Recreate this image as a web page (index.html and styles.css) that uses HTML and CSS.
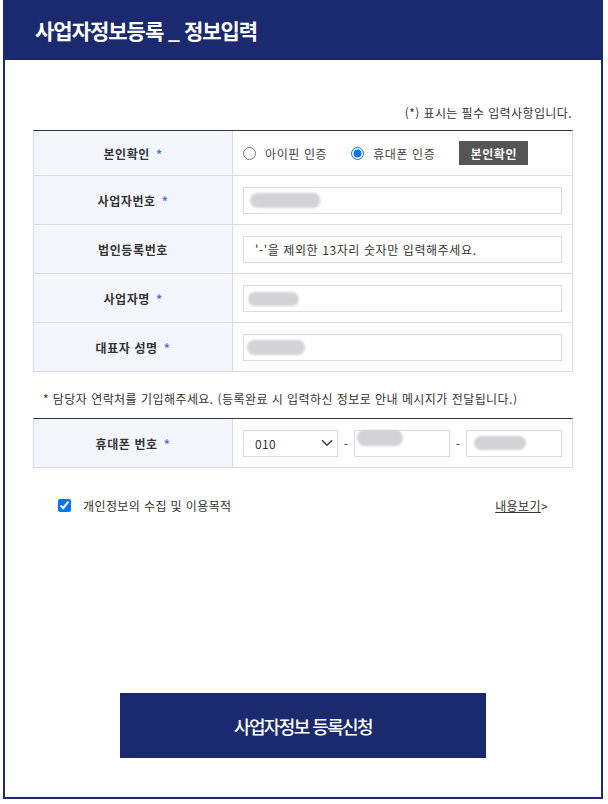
FILE: index.html
```html
<!DOCTYPE html>
<html lang="ko">
<head>
<meta charset="utf-8">
<title>사업자정보등록</title>
<link rel="stylesheet" href="styles.css">
</head>
<body>
<div class="page">
  <header class="top">
    <h1 class="title">사업자정보등록 _ 정보입력</h1>
  </header>
  <main class="content">
    <p class="req-note">(*) 표시는 필수 입력사항입니다.</p>

    <div class="form">
      <div class="row row-first">
        <div class="label">본인확인 <span class="star">*</span></div>
        <div class="cell">
          <label class="radio-item"><input type="radio" name="auth" class="radio"><span>아이핀 인증</span></label>
          <label class="radio-item radio-item-2"><input type="radio" name="auth" class="radio" checked><span>휴대폰 인증</span></label>
          <button class="btn-auth" type="button">본인확인</button>
        </div>
      </div>
      <div class="row">
        <div class="label">사업자번호 <span class="star">*</span></div>
        <div class="cell">
          <div class="field"><span class="blob blob-biz"></span></div>
        </div>
      </div>
      <div class="row">
        <div class="label">법인등록번호</div>
        <div class="cell">
          <div class="field field-text">'-'을 제외한 13자리 숫자만 입력해주세요.</div>
        </div>
      </div>
      <div class="row">
        <div class="label">사업자명 <span class="star">*</span></div>
        <div class="cell">
          <div class="field"><span class="blob blob-name"></span></div>
        </div>
      </div>
      <div class="row">
        <div class="label">대표자 성명 <span class="star">*</span></div>
        <div class="cell">
          <div class="field"><span class="blob blob-ceo"></span></div>
        </div>
      </div>
    </div>

    <p class="contact-note">* 담당자 연락처를 기입해주세요. (등록완료 시 입력하신 정보로 안내 메시지가 전달됩니다.)</p>

    <div class="form phone-form">
      <div class="row">
        <div class="label">휴대폰 번호 <span class="star">*</span></div>
        <div class="cell phone-cell">
          <div class="select">
            <span>010</span>
            <svg class="chev" width="12" height="8" viewBox="0 0 12 8"><path d="M1 1.2 L6 6.2 L11 1.2" fill="none" stroke="#444" stroke-width="1.6"/></svg>
          </div>
          <span class="dash">-</span>
          <div class="field phone-field"><span class="blob blob-ph1"></span></div>
          <span class="dash">-</span>
          <div class="field phone-field"><span class="blob blob-ph2"></span></div>
        </div>
      </div>
    </div>

    <div class="agree">
      <label class="agree-check"><input type="checkbox" class="checkbox" checked><span>개인정보의 수집 및 이용목적</span></label>
      <a class="more" href="#"><span class="more-u">내용보기</span>&gt;</a>
    </div>

    <div class="submit-wrap">
      <button class="submit" type="button">사업자정보 등록신청</button>
    </div>
  </main>
</div>
</body>
</html>
```

FILE: styles.css
```css
* { box-sizing: border-box; }

html, body {
  margin: 0;
  padding: 0;
  background: #fff;
}

body {
  font-family: "Noto Sans CJK KR", "Noto Sans", sans-serif;
  font-size: 12px;
  letter-spacing: 0.4px;
  color: #333;
}

.page {
  width: 600px;
  margin-left: 3px;
}

.top {
  height: 60px;
  background: #1b2a6e;
}

.title {
  margin: 0;
  padding-left: 32px;
  line-height: 60px;
  font-size: 21px;
  font-weight: 700;
  letter-spacing: -1px;
  color: #fff;
}

.content {
  border: 2px solid #1b2a6e;
  border-top: none;
  padding: 44px 28px 39px;
}

.req-note {
  margin: 0;
  line-height: 18px;
  text-align: right;
  color: #333;
  padding-right: 1px;
}

.form {
  margin-top: 8px;
  border-top: 1px solid #333;
  border-left: 1px solid #dcdcdc;
  border-right: 1px solid #dcdcdc;
}

.row {
  display: grid;
  grid-template-columns: 199px 1fr;
  height: 49px;
  border-bottom: 1px solid #dcdcdc;
}

.row-first {
  height: 45px;
}

.label {
  background: #f3f6fd;
  border-right: 1px solid #dcdcdc;
  display: flex;
  align-items: center;
  justify-content: center;
  font-weight: 700;
  color: #333;
  letter-spacing: 0.6px;
}

.star {
  color: #4a6ee8;
  margin-left: 6px;
  font-weight: 700;
}

.cell {
  display: flex;
  align-items: center;
  padding: 0 10px;
}

.radio-item {
  display: flex;
  align-items: center;
  color: #444;
  letter-spacing: 0.6px;
}

.radio {
  width: 13px;
  height: 13px;
  margin: 0 9px 0 0;
}

.radio-item-2 {
  margin-left: 24px;
}

.btn-auth {
  margin-left: 24px;
  width: 69px;
  height: 24px;
  border: none;
  background: #555;
  color: #fff;
  font-family: inherit;
  font-size: 12px;
  font-weight: 700;
  letter-spacing: 0.6px;
  padding: 0;
}

.field {
  width: 100%;
  height: 27px;
  border: 1px solid #dcdcdc;
  display: flex;
  align-items: center;
  padding-left: 6px;
  background: #fff;
}

.field-text {
  padding-left: 11px;
  color: #333;
  letter-spacing: 0.6px;
}

.blob {
  display: block;
  background: #d3d3d5;
  filter: blur(0.8px);
}

.blob-biz {
  width: 70px;
  height: 15px;
  border-radius: 9px 7px 7px 9px;
  margin-top: 1px;
}

.blob-name {
  width: 51px;
  height: 14px;
  border-radius: 8px;
  margin-left: -2px;
  margin-top: 1px;
}

.blob-ceo {
  width: 58px;
  height: 15px;
  border-radius: 8px;
  margin-left: -3px;
}

.phone-form {
  margin-top: 10px;
}

.phone-cell {
  padding: 0 10px;
}

.select {
  width: 95px;
  flex: none;
  height: 27px;
  border: 1px solid #dcdcdc;
  display: flex;
  align-items: center;
  justify-content: space-between;
  padding: 0 4px 0 11px;
  color: #333;
}

.chev {
  display: block;
}

.dash {
  width: 16px;
  flex: none;
  text-align: center;
  color: #444;
}

.phone-field {
  width: 96px;
  flex: none;
  padding-left: 0;
}

.blob-ph1 {
  width: 46px;
  height: 16px;
  border-radius: 8px;
  margin-left: 2px;
  margin-top: -10px;
}

.blob-ph2 {
  width: 52px;
  height: 14px;
  border-radius: 8px;
  margin-left: 7px;
}

.contact-note {
  margin: 18px 0 0;
  padding-left: 10px;
  line-height: 18px;
  color: #333;
  letter-spacing: 0.45px;
}

.agree {
  margin-top: 27px;
  height: 20px;
  padding: 0 25px;
  display: flex;
  align-items: center;
  justify-content: space-between;
}

.agree-check {
  display: flex;
  align-items: center;
  color: #333;
}

.checkbox {
  width: 13px;
  height: 13px;
  margin: 0 12px 0 0;
}

.more {
  color: #333;
  text-decoration: none;
}

.more-u {
  text-decoration: underline;
}

.submit-wrap {
  margin-top: 178px;
  display: flex;
  justify-content: center;
}

.submit {
  width: 366px;
  height: 65px;
  border: none;
  background: #1b2a6e;
  color: #fff;
  font-family: inherit;
  font-size: 18px;
  font-weight: 500;
  letter-spacing: -1.6px;
  padding: 0;
}
```
